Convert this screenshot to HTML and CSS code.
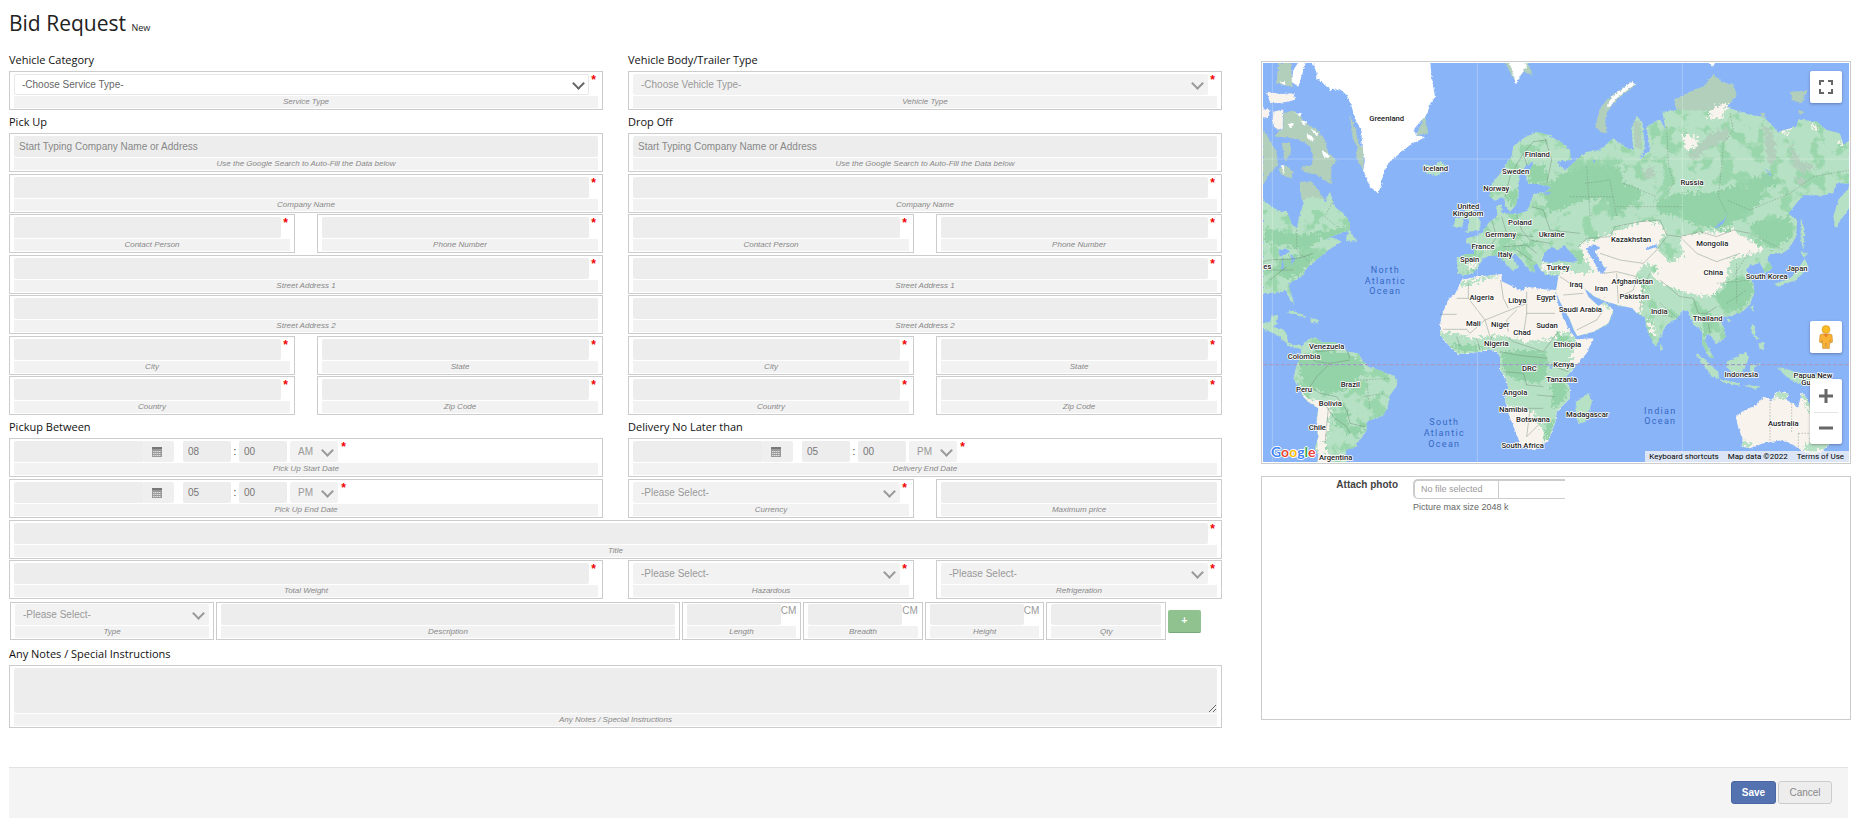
FILE: index.html
```html
<!DOCTYPE html>
<html lang="en">
<head>
<meta charset="utf-8">
<title>Bid Request</title>
<link rel="stylesheet" href="styles.css">
</head>
<body>
<svg class="defs" aria-hidden="true">
  <symbol id="calendar" viewBox="0 0 10 10"><path fill="#777" d="M0 0h10v2H0z"/><path fill="#999" d="M0 2h10v8H0z"/><path stroke="#ddd" stroke-width="1" stroke-dasharray="1.5 .5" d="M1 4.5h8M1 6.5h8M1 8.5h8"/></symbol>
</svg>
<form class="page">
<header class="head"><h1>Bid Request <small>New</small></h1></header>
<main class="columns">
<div class="form">
  <div class="pair">
    <section>
      <h2>Vehicle Category</h2>
      <div class="field"><div class="line"><div class="pick active"><select id="service"><option>-Choose Service Type-</option></select></div><span class="req">*</span></div><label for="service">Service Type</label></div>
      <h2>Pick Up</h2>
      <div class="stack">
        <div class="field"><div class="line"><input id="p-search" type="text" placeholder="Start Typing Company Name or Address"></div><label for="p-search">Use the Google Search to Auto-Fill the Data below</label></div>
        <div class="field"><div class="line"><input id="p-company" type="text"><span class="req">*</span></div><label for="p-company">Company Name</label></div>
        <div class="halves">
          <div class="field"><div class="line"><input id="p-contact" type="text"><span class="req">*</span></div><label for="p-contact">Contact Person</label></div>
          <div class="field"><div class="line"><input id="p-phone" type="text"><span class="req">*</span></div><label for="p-phone">Phone Number</label></div>
        </div>
        <div class="field"><div class="line"><input id="p-street1" type="text"><span class="req">*</span></div><label for="p-street1">Street Address 1</label></div>
        <div class="field"><div class="line"><input id="p-street2" type="text"></div><label for="p-street2">Street Address 2</label></div>
        <div class="halves">
          <div class="field"><div class="line"><input id="p-city" type="text"><span class="req">*</span></div><label for="p-city">City</label></div>
          <div class="field"><div class="line"><input id="p-state" type="text"><span class="req">*</span></div><label for="p-state">State</label></div>
        </div>
        <div class="halves">
          <div class="field"><div class="line"><input id="p-country" type="text"><span class="req">*</span></div><label for="p-country">Country</label></div>
          <div class="field"><div class="line"><input id="p-zip" type="text"><span class="req">*</span></div><label for="p-zip">Zip Code</label></div>
        </div>
      </div>
      <h2>Pickup Between</h2>
      <div class="stack even">
        <div class="field"><div class="line time"><input id="p-start" class="date" type="text"><button type="button" class="cal" aria-label="Choose start date"><svg><use href="#calendar"/></svg></button><input class="num" type="text" value="08" aria-label="Start hour"><span class="colon">:</span><input class="num" type="text" value="00" aria-label="Start minute"><div class="pick ampm"><select aria-label="Start AM or PM"><option>AM</option><option>PM</option></select></div><span class="req">*</span></div><label for="p-start">Pick Up Start Date</label></div>
        <div class="field"><div class="line time"><input id="p-end" class="date" type="text"><button type="button" class="cal" aria-label="Choose end date"><svg><use href="#calendar"/></svg></button><input class="num" type="text" value="05" aria-label="End hour"><span class="colon">:</span><input class="num" type="text" value="00" aria-label="End minute"><div class="pick ampm"><select aria-label="End AM or PM"><option>PM</option><option>AM</option></select></div><span class="req">*</span></div><label for="p-end">Pick Up End Date</label></div>
      </div>
    </section>
    <section>
      <h2>Vehicle Body/Trailer Type</h2>
      <div class="field"><div class="line"><div class="pick"><select id="vehicle"><option>-Choose Vehicle Type-</option></select></div><span class="req">*</span></div><label for="vehicle">Vehicle Type</label></div>
      <h2>Drop Off</h2>
      <div class="stack">
        <div class="field"><div class="line"><input id="d-search" type="text" placeholder="Start Typing Company Name or Address"></div><label for="d-search">Use the Google Search to Auto-Fill the Data below</label></div>
        <div class="field"><div class="line"><input id="d-company" type="text"><span class="req">*</span></div><label for="d-company">Company Name</label></div>
        <div class="halves">
          <div class="field"><div class="line"><input id="d-contact" type="text"><span class="req">*</span></div><label for="d-contact">Contact Person</label></div>
          <div class="field"><div class="line"><input id="d-phone" type="text"><span class="req">*</span></div><label for="d-phone">Phone Number</label></div>
        </div>
        <div class="field"><div class="line"><input id="d-street1" type="text"><span class="req">*</span></div><label for="d-street1">Street Address 1</label></div>
        <div class="field"><div class="line"><input id="d-street2" type="text"></div><label for="d-street2">Street Address 2</label></div>
        <div class="halves">
          <div class="field"><div class="line"><input id="d-city" type="text"><span class="req">*</span></div><label for="d-city">City</label></div>
          <div class="field"><div class="line"><input id="d-state" type="text"><span class="req">*</span></div><label for="d-state">State</label></div>
        </div>
        <div class="halves">
          <div class="field"><div class="line"><input id="d-country" type="text"><span class="req">*</span></div><label for="d-country">Country</label></div>
          <div class="field"><div class="line"><input id="d-zip" type="text"><span class="req">*</span></div><label for="d-zip">Zip Code</label></div>
        </div>
      </div>
      <h2>Delivery No Later than</h2>
      <div class="stack even">
        <div class="field"><div class="line time"><input id="d-end" class="date" type="text"><button type="button" class="cal" aria-label="Choose delivery date"><svg><use href="#calendar"/></svg></button><input class="num" type="text" value="05" aria-label="Delivery hour"><span class="colon">:</span><input class="num" type="text" value="00" aria-label="Delivery minute"><div class="pick ampm"><select aria-label="Delivery AM or PM"><option>PM</option><option>AM</option></select></div><span class="req">*</span></div><label for="d-end">Delivery End Date</label></div>
        <div class="halves">
          <div class="field"><div class="line"><div class="pick"><select id="currency"><option>-Please Select-</option></select></div><span class="req">*</span></div><label for="currency">Currency</label></div>
          <div class="field"><div class="line"><input id="price" type="text"></div><label for="price">Maximum price</label></div>
        </div>
      </div>
    </section>
  </div>
  <div class="field title-row"><div class="line"><input id="title" type="text"><span class="req">*</span></div><label for="title">Title</label></div>
  <div class="pair">
    <div class="field"><div class="line"><input id="weight" type="text"><span class="req">*</span></div><label for="weight">Total Weight</label></div>
    <div class="halves">
      <div class="field"><div class="line"><div class="pick"><select id="hazard"><option>-Please Select-</option></select></div><span class="req">*</span></div><label for="hazard">Hazardous</label></div>
      <div class="field"><div class="line"><div class="pick"><select id="fridge"><option>-Please Select-</option></select></div><span class="req">*</span></div><label for="fridge">Refrigeration</label></div>
    </div>
  </div>
  <div class="items">
    <div class="field"><div class="line"><div class="pick"><select id="type"><option>-Please Select-</option></select></div></div><label for="type">Type</label></div>
    <div class="field"><div class="line"><input id="desc" type="text"></div><label for="desc">Description</label></div>
    <div class="field"><div class="line"><input id="length" type="text"><span class="unit">CM</span></div><label for="length">Length</label></div>
    <div class="field"><div class="line"><input id="breadth" type="text"><span class="unit">CM</span></div><label for="breadth">Breadth</label></div>
    <div class="field"><div class="line"><input id="height" type="text"><span class="unit">CM</span></div><label for="height">Height</label></div>
    <div class="field"><div class="line"><input id="qty" type="text"></div><label for="qty">Qty</label></div>
    <button type="button" class="add" aria-label="Add item">+</button>
  </div>
  <h2>Any Notes / Special Instructions</h2>
  <div class="field"><textarea id="notes"></textarea><label for="notes">Any Notes / Special Instructions</label></div>
</div>
<aside class="side">
  <div class="map">
    <svg class="world" viewBox="39 39 1758 1197" preserveAspectRatio="xMidYMid slice" role="img" aria-label="World map">
      <defs>
        <filter id="coast" x="0" y="0" width="100%" height="100%"><feTurbulence type="fractalNoise" baseFrequency=".12" numOctaves="3" seed="4"/><feDisplacementMap in="SourceGraphic" scale="10" xChannelSelector="R" yChannelSelector="G"/></filter>
        <filter id="patch" x="0" y="0" width="100%" height="100%"><feTurbulence type="fractalNoise" baseFrequency=".1" numOctaves="4" seed="9"/><feDisplacementMap in="SourceGraphic" scale="34" xChannelSelector="R" yChannelSelector="G"/></filter>
        <filter id="speck" x="0" y="0" width="100%" height="100%" color-interpolation-filters="sRGB"><feTurbulence type="fractalNoise" baseFrequency=".022" numOctaves="5" seed="3"/><feColorMatrix values="0 0 0 0 .6  0 0 0 0 .84  0 0 0 0 .67  9 0 0 0 -4.7"/></filter>
        <path id="asia" d="M622 668L620 622 650 612 672 612 672 592 648 575 650 563 682 558 700 543 718 515 742 498 740 468 755 463 757 490 800 493 832 482 845 450 848 432 885 428 905 410 860 402 835 402 828 375 845 352 850 335 830 345 808 375 805 430 798 465 780 485 765 468 763 440 735 452 720 440 722 405 755 365 785 318 790 288 825 262 860 245 895 255 930 275 960 300 962 330 920 335 945 362 985 325 1010 305 1050 300 1090 265 1130 295 1150 300 1145 235 1160 198 1176 215 1186 290 1170 328 1200 300 1190 230 1230 208 1247 240 1237 185 1280 180 1272 150 1330 120 1360 110 1390 75 1415 95 1450 105 1460 135 1430 172 1500 195 1540 200 1585 245 1640 230 1645 208 1700 215 1730 240 1770 250 1780 285 1800 270 1800 400 1760 400 1750 430 1710 437 1660 435 1635 465 1615 490 1642 512 1638 560 1615 600 1590 612 1562 612 1550 625 1567 655 1545 668 1530 640 1500 645 1488 660 1507 695 1515 725 1500 765 1470 790 1430 800 1405 803 1420 830 1427 860 1400 882 1385 860 1370 850 1365 875 1392 925 1378 922 1358 885 1355 840 1330 825 1315 785 1300 780 1280 805 1245 830 1232 860 1220 887 1208 880 1185 820 1185 802 1160 790 1148 775 1105 765 1070 755 1035 740 1003 715 1015 740 1045 768 1065 757 1090 780 1075 820 1030 845 982 858 972 840 958 805 930 755 918 725 926 675 885 675 868 655 860 640 850 648 855 668 838 660 815 632 795 610 785 622 805 650 790 664 765 640 745 615 720 618 700 625 685 650 670 668 645 676Z"/>
        <path id="africa" d="M635 690L660 684 700 678 755 672 755 694 790 710 815 723 830 710 880 718 918 720 925 765 940 805 958 840 980 868 1030 865 1010 910 975 950 945 985 960 1015 960 1045 920 1085 915 1120 893 1175 850 1200 815 1190 800 1155 785 1115 770 1075 765 1045 775 1015 765 980 750 960 750 920 742 905 715 898 690 905 650 910 625 913 595 885 570 855 570 825 575 795 595 750 620 725Z"/>
        <path id="south" d="M155 890L175 867 200 865 215 877 255 877 280 895 295 905 325 910 340 935 355 950 385 960 430 977 442 990 440 1010 420 1035 412 1075 400 1095 375 1105 350 1115 350 1140 330 1170 310 1195 290 1198 285 1215 290 1240 200 1240 205 1215 195 1195 205 1160 200 1115 205 1075 175 1055 160 1040 150 1015 130 985 140 945 150 925Z"/>
        <path id="north" d="M39 450L60 465 80 480 110 485 125 520 140 535 148 500 160 460 150 420 150 395 185 395 205 420 225 455 240 425 255 470 285 495 300 520 300 540 270 550 220 570 250 562 275 575 235 600 205 625 170 655 155 680 115 700 120 720 133 763 120 750 108 722 75 728 39 730Z"/>
        <path id="oz" d="M1458 1100L1475 1085 1520 1065 1540 1040 1565 1050 1580 1025 1615 1030 1610 1050 1645 1070 1655 1025 1670 1045 1690 1085 1730 1120 1745 1145 1740 1180 1715 1205 1690 1215 1660 1205 1630 1185 1600 1170 1540 1180 1500 1195 1475 1190 1478 1165 1465 1135Z"/>
        <clipPath id="c1"><use href="#asia"/></clipPath><clipPath id="c2"><use href="#africa"/></clipPath><clipPath id="c3"><use href="#south"/></clipPath><clipPath id="c4"><use href="#north"/></clipPath><clipPath id="c5"><use href="#oz"/></clipPath>
      </defs>
      <path fill="#8ab4f8" d="M0 0h1900v1300H0z"/>
      <g filter="url(#coast)">
        <g fill="#b7e1c5">
          <use href="#asia"/><use href="#south"/><use href="#north"/>
          <path d="M285 572L298 540 322 575ZM39 820L60 815 65 797 85 795 80 820 72 832 100 838 112 855 110 875 130 885 155 885 155 897 120 890 90 860 60 845 39 838ZM108 785L130 782 168 798 165 803 135 795ZM180 805L205 808 203 818 182 815ZM522 342L545 348 575 335 593 355 560 378 530 368ZM655 455L670 480 692 515 690 540 648 547 658 515 643 480ZM615 505L640 498 638 530 612 532Z"/>
          <path d="M1750 500L1765 450 1800 410 1800 470 1755 535ZM1652 500L1664 540 1660 600 1652 570ZM1650 605L1675 610 1660 622ZM1665 625L1675 650 1640 690 1610 700 1585 712 1572 702 1620 685 1642 660ZM1503 770L1511 765 1508 785ZM1504 820L1516 830 1512 855 1530 865 1520 868 1505 850ZM1525 880L1542 880 1540 900 1528 895ZM1430 808L1440 806 1437 818ZM1230 880L1240 897 1231 903Z"/>
          <path d="M1430 935L1488 905 1496 925 1480 965 1445 968 1430 950ZM1335 910L1355 920 1405 965 1408 990 1382 975ZM1410 987L1470 1000 1470 1007 1412 995ZM1500 945L1532 940 1510 955 1517 980 1502 975ZM1580 953L1600 953 1630 965 1700 975 1735 1005 1700 1000 1640 1000 1610 980ZM1480 1005L1530 1008 1515 1018ZM978 1055L1018 1030 1026 1055 1008 1115 985 1122 977 1095Z"/>
        </g>
        <g fill="#b1cfba">
          <path d="M85 39H122L128 112 80 100ZM39 240L60 270 80 310 85 345 60 370 39 405ZM100 190L125 182 150 190 160 215 200 240 225 270 235 310 260 330 245 350 242 402 200 375 160 365 155 350 185 345 190 320 180 290 150 270 110 262 75 260 85 245 100 235ZM95 280L120 275 122 310 105 335 100 300ZM85 355L110 345 130 370 125 385 95 375ZM150 395L185 395 205 420 225 450 190 440 155 450ZM300 195L315 230 325 280 342 300 340 360 318 320 322 290 308 265ZM540 160L525 200 535 250 500 255 515 215Z"/>
          <path d="M1036 230L1050 175 1080 140 1145 95 1157 105 1100 150 1072 185 1066 215 1070 250 1052 247ZM1272 150L1330 120 1360 110 1390 75 1415 95 1450 105 1460 135 1430 170 1380 182 1280 180ZM1622 125L1672 122 1655 160 1625 150ZM1645 180L1662 185 1650 194ZM765 39H835L848 75 820 65 797 95ZM1530 190L1545 188 1543 205ZM1150 215L1172 215 1176 300 1155 290Z"/>
        </g>
        <use href="#africa" fill="#f8f3ed"/><use href="#oz" fill="#f8f3ed"/>
        <path fill="#f8f3ed" d="M50 125L90 132 132 130 135 150 90 160 60 158ZM70 185L100 178 98 235 80 240 68 220ZM39 175L62 180 50 205 39 200Z"/>
        <g fill="#fff">
          <path d="M185 30L200 70 198 85 215 95 240 120 270 118 290 135 305 170 315 205 335 245 335 290 345 330 340 360 352 390 360 410 385 430 395 400 400 370 415 340 450 310 480 285 525 262 500 255 490 240 510 215 530 195 540 165 555 140 550 110 545 80 540 30ZM150 30H170L145 110 125 95 130 60ZM1070 170L1085 140 1145 95 1155 103 1100 145 1080 170ZM775 30L835 42 820 60 798 103 788 65ZM1368 30H1400L1388 52ZM88 95L105 92 102 105ZM135 185L155 190 150 200ZM110 222L132 220 125 235ZM150 208L168 215 165 228ZM170 250L192 262 188 275 172 265ZM215 300L240 315 235 325 220 318ZM180 235L205 250 200 258ZM95 345L103 350 100 375Z"/>
        </g>
      </g>
      <g clip-path="url(#c1)"><rect x="39" y="180" width="1758" height="780" filter="url(#speck)"/><g filter="url(#patch)">
        <g fill="#94d3a7"><path d="M900 400L940 370 1020 345 1110 350 1120 400 1180 430 1085 510 1070 450 1000 450 950 470 900 490 880 430ZM1290 430L1400 425 1470 400 1550 440 1480 500 1400 540 1300 510ZM835 350L880 340 900 400 840 400ZM770 440L810 410 795 450 785 470ZM1500 520L1620 500 1630 560 1560 600 1520 560ZM1400 740L1440 690 1500 680 1515 725 1470 785 1410 770ZM1215 450L1300 430 1290 500 1230 490ZM760 590L860 570 850 590 760 605ZM1355 790L1380 780 1385 850 1360 860ZM1480 400L1560 370 1600 400 1520 430Z"/></g>
        <g fill="#b1cfba"><path d="M1310 320L1370 260 1430 230 1440 260 1370 300 1340 330ZM1540 220L1570 250 1580 330 1560 350 1545 290ZM1620 280L1650 330 1700 350 1660 370 1630 350ZM1630 380L1680 390 1650 410ZM1170 360L1210 350 1215 380 1180 385Z"/></g>
        <g fill="#f8f3ed"><path d="M990 580L1060 560 1100 545 1170 515 1225 515 1248 550 1215 590 1260 640 1250 660 1180 640 1160 680 1180 720 1170 790 1105 775 1035 745 1000 710 1070 770 1110 780 1090 835 980 880 940 805 905 740 905 675 960 665 1000 670 1035 665 1000 620ZM1290 555L1400 545 1450 540 1500 570 1540 600 1440 630 1430 690 1380 740 1330 735 1260 710 1200 680 1230 650 1300 620ZM1295 255L1340 260 1340 290 1310 300ZM1370 200L1400 165 1440 160 1410 210ZM1590 235L1630 230 1600 255ZM1690 215L1705 240 1690 240ZM1765 270L1785 285 1770 290ZM650 640L680 635 665 665ZM870 640L950 645 940 660 880 665ZM1190 810L1210 820 1215 860 1200 850Z"/></g>
        <path fill="#b7e1c5" d="M1170 680L1200 670 1230 700 1330 740 1330 760 1270 780 1220 760ZM960 640L1020 650 1010 665 970 660Z"/>
      </g></g>
      <g clip-path="url(#c2)"><g filter="url(#patch)">
        <path fill="#b7e1c5" d="M550 845L620 850 660 865 720 858 780 860 830 875 900 870 930 845 965 850 985 885 960 920 985 950 930 1210 880 1150 850 1085 760 1065 730 900 620 930ZM625 700L700 680 750 674 700 690 640 712Z"/>
        <path fill="#94d3a7" d="M750 905L820 900 890 910 895 960 870 1000 810 995 765 970ZM600 880L650 885 720 890 640 910ZM920 850L955 860 950 890 925 880ZM900 1000L950 990 950 1040 910 1080ZM890 1120L915 1100 900 1160 880 1180Z"/>
      </g></g>
      <g clip-path="url(#c3)"><rect x="120" y="860" width="330" height="380" filter="url(#speck)"/><g filter="url(#patch)">
        <path fill="#94d3a7" d="M140 925L200 900 300 910 345 940 320 995 290 1020 220 1030 160 1000ZM280 1150L340 1110 350 1130 320 1160ZM250 1090L300 1080 290 1130 255 1130Z"/>
        <path fill="#f8f3ed" d="M120 980L165 1040 205 1055 240 1070 235 1135 225 1180 240 1245 205 1245 200 1120 195 1070 150 1050Z"/>
      </g></g>
      <g clip-path="url(#c4)"><rect x="39" y="480" width="290" height="290" filter="url(#speck)"/><g filter="url(#patch)">
        <path fill="#94d3a7" d="M39 530L110 550 150 555 290 530 290 550 210 570 170 600 39 575ZM90 625L200 610 165 665 110 690 80 660Z"/>
      </g></g>
      <g clip-path="url(#c5)"><g filter="url(#patch)">
        <path fill="#b7e1c5" d="M1470 1170L1510 1180 1480 1200ZM1570 1030L1620 1020 1610 1048 1570 1045ZM1650 1025L1670 1020 1740 1130 1750 1180 1680 1215 1660 1190 1710 1150Z"/>
      </g></g>
      <g fill="#8ab4f8" filter="url(#coast)">
        <path d="M875 632L885 605 905 590 925 600 942 585 965 612 985 632 960 637 930 632 900 640ZM1008 597L1030 583 1050 592 1035 605 1052 635 1068 655 1062 672 1045 665 1035 640ZM1395 530L1425 505 1432 490 1425 515 1400 535ZM1185 595L1220 583 1220 590 1190 600ZM85 600L110 595 120 605 90 620ZM120 610L135 625 128 650ZM98 620L102 660 92 655ZM895 945L908 948 905 960ZM880 428L905 425 895 435ZM1030 325l8 10-8 4zM1540 350l25 25-6 2z"/>
      </g>
      <g class="borders">
        <path d="M620 745L655 745 655 700M655 745L705 810 830 760M570 793H620M580 838H650L660 850 705 810M752 690L760 745 775 775M830 725V790H915M830 790L820 855M705 810L720 860M770 860L790 875 880 905M750 905L800 915 890 925M760 965L820 970 830 1005 880 1010M770 1075H880M860 1035L915 1040M840 1080L830 1160 860 1130 895 1100M775 845L770 810 800 780M880 905L905 870 925 845M900 945L955 965M620 860L630 890M680 865L690 900M725 860L715 895"/>
        <path d="M160 915L200 935 240 940 300 930M240 940L200 980 180 1010 210 1030 260 1040 290 1080 300 1120 345 1130M205 1060L230 1070 250 1100 290 1130 300 1150M235 1075L225 1180M180 880L200 905 260 900M290 900L300 925M39 635C80 620 120 640 190 610M50 660H130M60 690L110 650"/>
        <path d="M985 590L1010 565 1080 560 1095 530 1170 515 1230 510 1250 555 1290 560 1350 545 1400 560 1450 540 1500 550M1290 560L1340 610 1400 635 1470 610M1250 560L1220 600 1180 640 1110 630 1050 610M1060 670L1100 665 1160 680M1100 670L1105 760M1160 680L1150 720 1110 740M1200 670L1180 710 1170 780M1230 690L1290 740 1330 745M1330 745L1345 790 1370 790 1400 770M1370 790L1380 850M930 680L960 700 1000 710M940 735L1000 730M980 840L1040 810 1060 780M725 510L740 560 720 590M755 500L770 550 850 560M800 495L815 540 840 570 900 580M845 470L880 480 900 540 990 550M765 440L780 380 820 310 850 275 890 270M830 345L820 310M885 265L905 330 890 400M760 590L830 585 860 610M800 600L850 635"/>
      </g>
      <g class="borders dots">
        <path d="M1560 1050V1175M1625 1060V1150M1645 1150H1700M1645 1150V1195M140 540V600L180 640M250 450L225 500 260 530M1440 190L1450 240 1420 280 1415 350 1405 440 1430 490M1250 230L1255 340 1270 400 1250 430M1005 400L1080 390 1100 500M1800 360L1690 380 1620 430 1500 480 1430 450M960 440H1090M1010 350L1020 500M1120 400L1220 440M1100 470H1300M1460 640V760M1400 700L1500 690M1520 560L1600 600M1430 760L1490 720M1500 600L1450 680M330 990L420 985M340 1040L400 1030M350 990L360 1080M1230 760L1290 810M1200 790L1270 800"/>
      </g>
      <path stroke="#fff" stroke-opacity=".4" stroke-width="2" d="M67 39V1240M682 39V1240M1297 39V1240M39 327H1800"/>
      <path stroke="#a59bc5" stroke-width="4" stroke-dasharray="12 6" d="M39 944H1800"/>
      <g class="names">
        <text x="410" y="214">Greenland</text><text x="557" y="363">Iceland</text><text x="862" y="320">Finland</text><text x="797" y="371">Sweden</text><text x="739" y="423">Norway</text><text x="655" y="476">United</text><text x="654" y="498">Kingdom</text><text x="810" y="524">Poland</text><text x="752" y="560">Germany</text><text x="905" y="560">Ukraine</text><text x="699" y="596">France</text><text x="765" y="622">Italy</text><text x="659" y="637">Spain</text><text x="1326" y="404">Russia</text><text x="1143" y="575">Kazakhstan</text><text x="1387" y="589">Mongolia</text><text x="924" y="661">Turkey</text><text x="978" y="712">Iraq</text><text x="1054" y="724">Iran</text><text x="1147" y="702">Afghanistan</text><text x="1153" y="746">Pakistan</text><text x="1390" y="676">China</text><text x="1550" y="686">South Korea</text><text x="1641" y="662">Japan</text><text x="1228" y="791">India</text><text x="991" y="787">Saudi Arabia</text><text x="1373" y="813">Thailand</text><text x="695" y="751">Algeria</text><text x="802" y="760">Libya</text><text x="888" y="751">Egypt</text><text x="670" y="827">Mali</text><text x="751" y="830">Niger</text><text x="891" y="835">Sudan</text><text x="816" y="856">Chad</text><text x="739" y="888">Nigeria</text><text x="952" y="892">Ethiopia</text><text x="941" y="950">Kenya</text><text x="838" y="964">DRC</text><text x="935" y="995">Tanzania</text><text x="796" y="1036">Angola</text><text x="790" y="1086">Namibia</text><text x="849" y="1115">Botswana</text><text x="818" y="1194">South Africa</text><text x="1012" y="1101">Madagascar</text><text x="230" y="897">Venezuela</text><text x="162" y="926">Colombia</text><text x="301" y="1010">Brazil</text><text x="162" y="1026">Peru</text><text x="241" y="1067">Bolivia</text><text x="202" y="1141">Chile</text><text x="257" y="1229">Argentina</text><text x="1474" y="981">Indonesia</text><text x="1689" y="983">Papua New</text><text x="1690" y="1005">Guinea</text><text x="1600" y="1128">Australia</text><text x="52" y="657">es</text>
      </g>
      <g class="seas">
        <text x="406" y="668">North</text><text x="406" y="701">Atlantic</text><text x="406" y="733">Ocean</text><text x="583" y="1126">South</text><text x="583" y="1159">Atlantic</text><text x="583" y="1190">Ocean</text><text x="1231" y="1092">Indian</text><text x="1231" y="1123">Ocean</text>
      </g>
    </svg>
    <button type="button" class="ctl full" aria-label="Toggle fullscreen"><svg viewBox="0 0 14 14"><path d="M1 5V1h4M9 1h4v4M13 9v4H9M5 13H1V9"/></svg></button>
    <button type="button" class="ctl man" aria-label="Street View"><svg viewBox="0 0 14 24"><path fill="#f9b233" stroke="#c8862a" stroke-width=".6" d="M3 9h8l2 1 .5 7-2 1-.5-3-.8 8.5H7.5L7 18l-.5 5.500H3.800L3 15l-.5 3-2-1L1 10z"/><path fill="#e8812b" d="M4.500 9h5L7 12.500z"/><circle cx="7" cy="4.500" r="4" fill="#fbbc24" stroke="#c8862a" stroke-width=".5"/></svg></button>
    <div class="ctl zoom"><button type="button" aria-label="Zoom in"><svg viewBox="0 0 14 14"><path d="M0 7h14M7 0v14"/></svg></button><button type="button" aria-label="Zoom out"><svg viewBox="0 0 14 14"><path d="M0 7h14"/></svg></button></div>
    <a class="logo" href="#"><span class="b">G</span><span class="r">o</span><span class="y">o</span><span class="b">g</span><span class="g">l</span><span class="r">e</span></a>
    <div class="credits"><button type="button">Keyboard shortcuts</button><span>Map data ©2022</span><a href="#">Terms of Use</a></div>
  </div>
  <div class="attach">
    <label for="photo">Attach photo</label>
    <div><label class="file" for="photo"><span>No file selected</span><input id="photo" type="file"></label><p>Picture max size 2048 k</p></div>
  </div>
</aside>
</main>
<footer class="actions"><button type="submit" class="btn save">Save</button><button type="button" class="btn cancel">Cancel</button></footer>
</form>
</body>
</html>
```
FILE: styles.css
```css
* { box-sizing: border-box; }
body { margin: 0; background: #fff; color: #333; font: 10px/12px "Liberation Sans", Arial, sans-serif; }
button, input, select, textarea { font: inherit; color: inherit; margin: 0; border: 0; border-radius: 2px; }
button { cursor: pointer; }
.defs { position: absolute; width: 0; height: 0; }
.page { padding: 0 12px 0 9px; }
.head { height: 48px; padding-top: 7px; }
h1 { margin: 0; font: 400 21px/32px "Open Sans", sans-serif; color: #222; }
h1 small { font-size: 9px; }
h2 { margin: 0; padding: 2px 0 1px; font: 400 11px/20px "Open Sans", sans-serif; color: #111; }
.columns { display: grid; grid-template-columns: 1213fr 590fr; gap: 39px; }
.pair { display: grid; grid-template-columns: 1fr 1fr; gap: 25px; }
.halves { display: grid; grid-template-columns: 1fr 1fr; gap: 22px; }
.stack > * { margin-bottom: 1px; }
.stack > :nth-child(odd), .stack.even > * { margin-bottom: 2px; }
.stack:not(.even) > :last-child { margin-bottom: 0; }

.field { border: 1px solid #ccc; padding: 2px 4px 1px; min-width: 0; }
.field > label { display: block; margin-top: 1px; height: 12px; background: #f2f2f2; color: #888; font-size: 8px; font-style: italic; text-align: center; }
.line { display: flex; height: 21px; }
.line input { flex: 1; min-width: 0; height: 21px; padding: 0 5px; background: #ededed; color: #777; outline: 0; }
.line input::placeholder { color: #888; opacity: 1; }
.req { width: 9px; color: #e00; font-weight: 700; font-size: 12px; line-height: 12px; text-align: center; }
.pick { position: relative; flex: 1; min-width: 0; }
.pick select { width: 100%; height: 21px; padding: 0 20px 0 8px; appearance: none; background: #f2f2f2; color: #999; outline: 0; }
.pick::after { content: ""; position: absolute; right: 6px; top: 5px; width: 7px; height: 7px; border: solid #999; border-width: 0 2px 2px 0; transform: rotate(45deg); pointer-events: none; }
.pick.active select { background: #fff; border: 1px solid #e8e8e8; color: #666; padding-left: 7px; }
.pick.active::after { border-color: #666; }
.time input.date { flex: 0 0 129px; border-radius: 2px 0 0 2px; }
.cal { width: 31px; padding: 0 4px 0 0; margin-right: 9px; background: #efefef; display: flex; align-items: center; justify-content: center; }
.cal svg { width: 10px; height: 10px; }
.time input.num { flex: 0 0 48px; }
.colon { width: 8px; line-height: 21px; text-align: center; }
.time .ampm { flex: 0 0 48px; margin-left: 3px; }
.time .req { margin-left: 1px; }
.title-row { margin-bottom: 1px; }
.items { display: grid; grid-template-columns: 205fr 465fr 120fr 120fr 120fr 120fr 33px; gap: 2px; padding: 3px 21px 2px 1px; align-items: start; }
.items .field { padding: 1px 4px; }
.unit { color: #999; line-height: 14px; }
.add { height: 23px; margin-top: 8px; background: #8fc28f; border-bottom: 1px solid #74a874; color: #fff; font-weight: 700; padding: 0; }
textarea { display: block; width: 100%; height: 45px; background: #ededed; resize: vertical; }

.side { padding-top: 13px; }
.map { position: relative; border: 1px solid #ccc; padding: 1px; }
.world { display: block; width: 100%; height: 399px; }
.borders { fill: none; stroke: #69806f; stroke-width: 2; stroke-opacity: .6; }
.dots { stroke-dasharray: 5 4; }
.names { font: 500 23px Roboto, sans-serif; fill: #222; stroke: #fff; stroke-width: 5px; stroke-linejoin: round; paint-order: stroke; text-anchor: middle; }
.seas { font: 400 27px Roboto, sans-serif; fill: #3568c4; letter-spacing: 4px; text-anchor: middle; }
.ctl { position: absolute; right: 8px; width: 32px; background: #fff; border-radius: 2px; box-shadow: 0 1px 3px rgba(0, 0, 0, .3); padding: 0; display: flex; align-items: center; justify-content: center; }
.ctl svg { fill: none; stroke: #666; stroke-width: 2; width: 14px; height: 14px; }
.full { top: 9px; height: 32px; }
.man { top: 259px; height: 32px; }
.man svg { height: 24px; stroke: none; }
.zoom { top: 317px; height: 65px; flex-direction: column; }
.zoom button { width: 24px; height: 32px; padding: 0; background: none; display: flex; align-items: center; justify-content: center; }
.zoom button + button { border-top: 1px solid #e3e3e3; border-radius: 0; }
.zoom svg { stroke-width: 3; }
.logo { position: absolute; left: 9px; bottom: 2px; font: 700 14px/18px Lato, sans-serif; text-decoration: none; text-shadow: 0 0 1px #fff, 1px 0 #fff, -1px 0 #fff, 0 1px #fff, 0 -1px #fff; }
.logo .b { color: #4285f4; } .logo .r { color: #ea4335; } .logo .y { color: #fbbc05; } .logo .g { color: #34a853; }
.credits { position: absolute; right: 1px; bottom: 1px; display: flex; gap: 9px; padding: 0 5px 0 4px; background: rgba(245, 245, 245, .75); font: 8px/11px Roboto, sans-serif; color: #000; }
.credits button { padding: 0; background: none; }
.credits a { color: inherit; text-decoration: none; }

.attach { display: flex; gap: 15px; height: 244px; margin-top: 12px; padding: 2px 0; border: 1px solid #ccc; }
.attach > label { width: 136px; text-align: right; font-weight: 700; color: #444; }
.file { display: flex; width: 152px; height: 20px; border: 1px solid #ccc; border-width: 2px 0 1px 2px; border-radius: 5px 0 0 5px; font-size: 9px; line-height: 17px; color: #999; }
.file span { width: 84px; padding-left: 6px; border-right: 1px solid #ccc; }
.file input { flex: 1; min-width: 0; opacity: 0; }
.attach p { margin: 2px 0 0; font-size: 9px; color: #666; }

.actions { display: flex; justify-content: flex-end; gap: 2px; height: 51px; margin: 39px 3px 0 0; padding: 13px 16px 0 0; background: #f4f4f4; border-top: 1px solid #e2e2e2; }
.btn { height: 23px; border-radius: 3px; padding: 0; }
.save { width: 45px; background: #5472b0; border: 1px solid #4a66a2; color: #fff; font-weight: 700; }
.cancel { width: 54px; background: #ededed; border: 1px solid #ccc; color: #888; }
```
